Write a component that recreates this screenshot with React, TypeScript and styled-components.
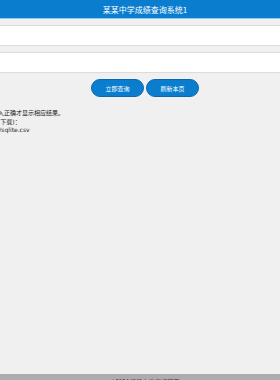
import React from "react";
import styled, { createGlobalStyle } from "styled-components";

const GlobalStyle = createGlobalStyle`
    html, body {
        margin: 0;
        padding: 0;
        background: #f0f0f0;
        overflow: hidden;
        font-family: "Noto Sans CJK SC", "Noto Sans", sans-serif;
    }
`;

// the shot is cut on the left, so the page sits a bit off-screen
const Page = styled.div`
    width: 330px;
    margin-left: -20px;
    display: flex;
    flex-direction: column;
`;

const Header = styled.header`
    height: 18px;
    background: #0a7dcf;
    border-bottom: 1px solid #86d0f4;
    color: #fff;
    font-size: 8px;
    display: flex;
    align-items: center;
    justify-content: center;
`;

const Main = styled.main`
    min-height: 355px;
    padding-top: 6px;
    box-sizing: border-box;
    display: flex;
    flex-direction: column;
`;

const Input = styled.input`
    display: block;
    height: 21px;
    box-sizing: border-box;
    margin: 0 0 6px;
    border: 1px solid #dcdcdc;
    border-left: none;
    border-right: none;
    background: #fff;
    outline: none;
`;

const Buttons = styled.div`
    display: flex;
    justify-content: center;
    gap: 2px;
`;

const Button = styled.button`
    width: 53px;
    height: 18px;
    border-radius: 9px;
    border: 1px solid #0a68ad;
    background: #0a7dcf;
    color: #fff;
    font-family: inherit;
    font-size: 6px;
    padding: 0;
`;

const Notes = styled.div`
    margin-top: 12px;
    font-family: "DejaVu Sans", "Noto Sans CJK SC", sans-serif;
    font-size: 6px;
    line-height: 8.5px;
    color: #222;
`;

const Footer = styled.footer`
    height: 20px;
    background: #adadad;
    color: #333;
    font-size: 6px;
    text-align: center;
    padding-top: 3px;
    box-sizing: border-box;
`;

const App: React.FC = () => {
    return (
        <>
            <GlobalStyle />
            <Page>
                <Header>某某中学成绩查询系统1</Header>
                <Main>
                    <Input />
                    <Input />
                    <Buttons>
                        <Button>立即查询</Button>
                        <Button>刷新本页</Button>
                    </Buttons>
                    <Notes>
                        <div>只有输入正确才显示相应结果。</div>
                        <div>数据源(下载)：</div>
                        <div>../data/sqlite.csv</div>
                    </Notes>
                </Main>
                <Footer>©2024 某某中学 版权所有</Footer>
            </Page>
        </>
    );
};

export default App;
